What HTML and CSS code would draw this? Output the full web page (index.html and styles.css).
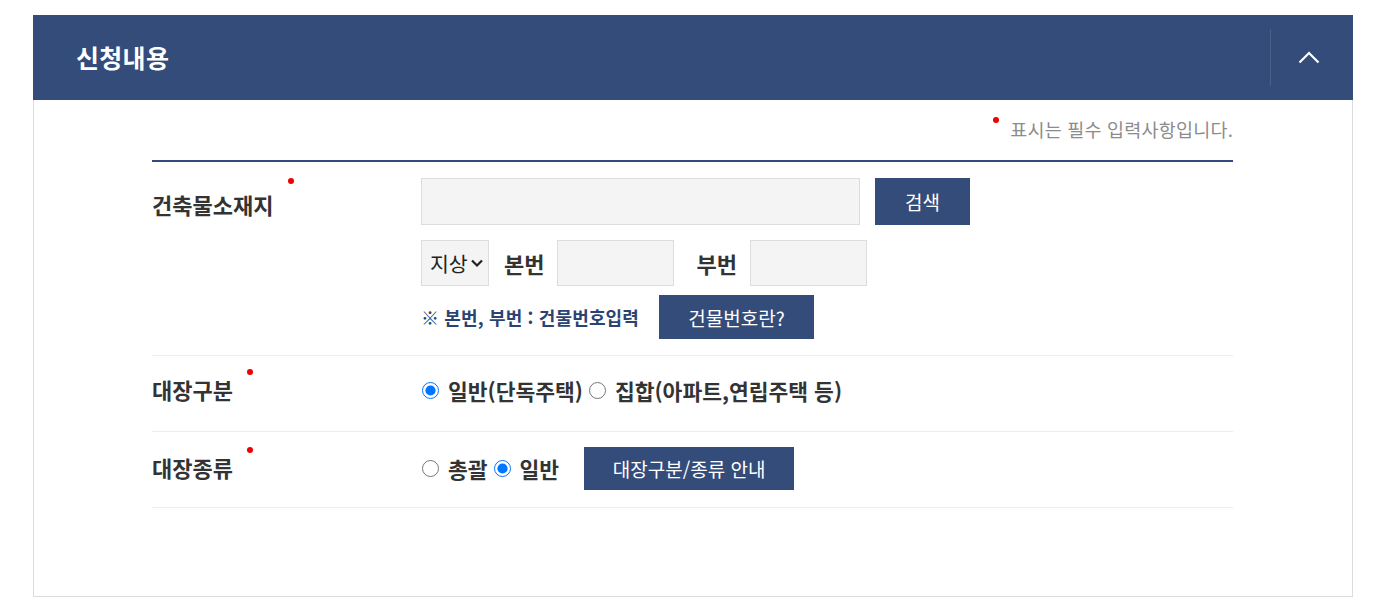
FILE: index.html
```html
<!DOCTYPE html>
<html lang="ko">
<head>
<meta charset="utf-8">
<title>신청내용</title>
<link rel="stylesheet" href="styles.css">
</head>
<body>
<section class="panel">
  <header class="panel-head">
    <h2 class="panel-title">신청내용</h2>
    <button class="toggle" type="button" aria-label="접기">
      <svg width="22" height="14" viewBox="0 0 22 14"><path d="M1.5 12.5 L11 3 L20.5 12.5" fill="none" stroke="#fff" stroke-width="2.2"/></svg>
    </button>
  </header>
  <div class="panel-body">
    <p class="req-note"><span class="dot dot-note"></span>표시는 필수 입력사항입니다.</p>
    <div class="form">
      <div class="row row-addr">
        <div class="label"><span class="label-text">건축물소재지<span class="dot dot-label dot-first"></span></span></div>
        <div class="value">
          <div class="line">
            <input class="input input-addr" type="text">
            <button class="btn btn-search" type="button">검색</button>
          </div>
          <div class="line">
            <div class="select">지상<svg width="14" height="10" viewBox="0 0 14 10"><path d="M2 2.5 L7 7.5 L12 2.5" fill="none" stroke="#222" stroke-width="2.2"/></svg></div>
            <span class="sub-label sub-first">본번</span>
            <input class="input input-num" type="text">
            <span class="sub-label sub-second">부번</span>
            <input class="input input-num" type="text">
          </div>
          <div class="line">
            <span class="hint">※ 본번, 부번 : 건물번호입력</span>
            <button class="btn btn-bno" type="button">건물번호란?</button>
          </div>
        </div>
      </div>
      <div class="row row-radio">
        <div class="label"><span class="label-text">대장구분<span class="dot dot-label"></span></span></div>
        <div class="value value-inline">
          <label class="radio"><input type="radio" name="gubun" checked><span>일반(단독주택)</span></label>
          <label class="radio"><input type="radio" name="gubun"><span>집합(아파트,연립주택 등)</span></label>
        </div>
      </div>
      <div class="row row-radio row-kind">
        <div class="label"><span class="label-text">대장종류<span class="dot dot-label"></span></span></div>
        <div class="value value-inline">
          <label class="radio"><input type="radio" name="kind"><span>총괄</span></label>
          <label class="radio"><input type="radio" name="kind" checked><span>일반</span></label>
          <button class="btn btn-guide" type="button">대장구분/종류 안내</button>
        </div>
      </div>
    </div>
  </div>
</section>
</body>
</html>
```

FILE: styles.css
```css
* { box-sizing: border-box; }
html, body { margin: 0; padding: 0; background: #fff; }
body {
  font-family: "Noto Sans CJK KR", "Noto Sans", sans-serif;
  color: #333;
}
.panel {
  margin: 15px 0 0 33px;
  width: 1320px;
  height: 582px;
  border: 1px solid #dcdcdc;
  border-top: 0;
  display: flex;
  flex-direction: column;
}
.panel-head {
  height: 85px;
  margin: 0 -1px;
  background: #344c79;
  display: flex;
  align-items: center;
  justify-content: space-between;
}
.panel-title {
  margin: 0 0 2px 43px;
  color: #fff;
  font-size: 25px;
  font-weight: 700;
  letter-spacing: 0.3px;
}
.toggle {
  width: 83px;
  height: 57px;
  border: 0;
  border-left: 1px solid #4a6088;
  background: transparent;
  display: flex;
  align-items: center;
  justify-content: center;
  padding: 0 6px 1px 0;
  cursor: pointer;
}
.panel-body {
  padding: 16px 119px 0 118px;
}
.req-note {
  margin: 0;
  text-align: right;
  font-size: 18.5px;
  line-height: 26px;
  color: #8c8c8c;
  letter-spacing: 0.2px;
}
.dot {
  display: inline-block;
  width: 6px;
  height: 6px;
  border-radius: 50%;
  background: #f00000;
}
.dot-note {
  vertical-align: top;
  margin: 1px 11px 0 0;
}
.form {
  margin-top: 18px;
  border-top: 2px solid #344c79;
}
.row {
  display: flex;
  border-bottom: 1px solid #ececec;
}
.label {
  width: 269px;
  flex: none;
}
.label-text {
  position: relative;
  font-size: 22px;
  font-weight: 700;
  color: #333;
}
.dot-label {
  position: absolute;
  top: -4px;
  right: -20px;
}
.dot-first {
  top: -10px;
  right: -21px;
}
.row-addr {
  padding: 16px 0 16px;
}
.row-addr .label { padding-top: 12px; line-height: 28px; }
.value {
  display: flex;
  flex-direction: column;
}
.line {
  display: flex;
  align-items: center;
}
.line + .line { margin-top: 15px; }
.line:last-child { margin-top: 9px; }
.input {
  height: 47px;
  border: 1px solid #dddddd;
  background: #f4f4f4;
  padding: 0 10px;
  font: inherit;
}
.input-addr { width: 439px; }
.input-num { width: 117px; height: 46px; }
.btn {
  border: 0;
  background: #344c79;
  color: #fff;
  font-family: inherit;
  font-size: 19px;
  cursor: pointer;
  padding: 0;
}
.btn-search { width: 95px; height: 47px; margin-left: 15px; }
.btn-bno { width: 155px; height: 44px; margin-left: 20px; }
.btn-guide { width: 210px; height: 43px; margin-left: 20px; }
.select {
  width: 68px;
  height: 46px;
  border: 1px solid #dddddd;
  background: #f4f4f4;
  display: flex;
  align-items: center;
  padding-left: 8px;
  font-size: 20.5px;
  color: #222;
  gap: 2px;
}
.sub-label {
  font-size: 22px;
  font-weight: 700;
  color: #333;
}
.sub-first { margin: 0 13px 0 15px; }
.sub-second { margin: 0 13px 0 22px; }
.hint {
  font-size: 18px;
  font-weight: 700;
  color: #2c4371;
  letter-spacing: 0.15px;
}
.row-radio {
  height: 76px;
  align-items: center;
  padding-bottom: 7px;
}
.row-kind { padding-bottom: 3px; }
.row-radio .label { line-height: 28px; }
.value-inline {
  flex-direction: row;
  align-items: center;
}
.radio {
  display: inline-flex;
  align-items: center;
  font-size: 21.5px;
  font-weight: 700;
  color: #333;
  margin-right: 5px;
  letter-spacing: 0;
}
.radio input {
  width: 17px;
  height: 17px;
  margin: 0 9px 0 1px;
  accent-color: #0075ff;
}
```
